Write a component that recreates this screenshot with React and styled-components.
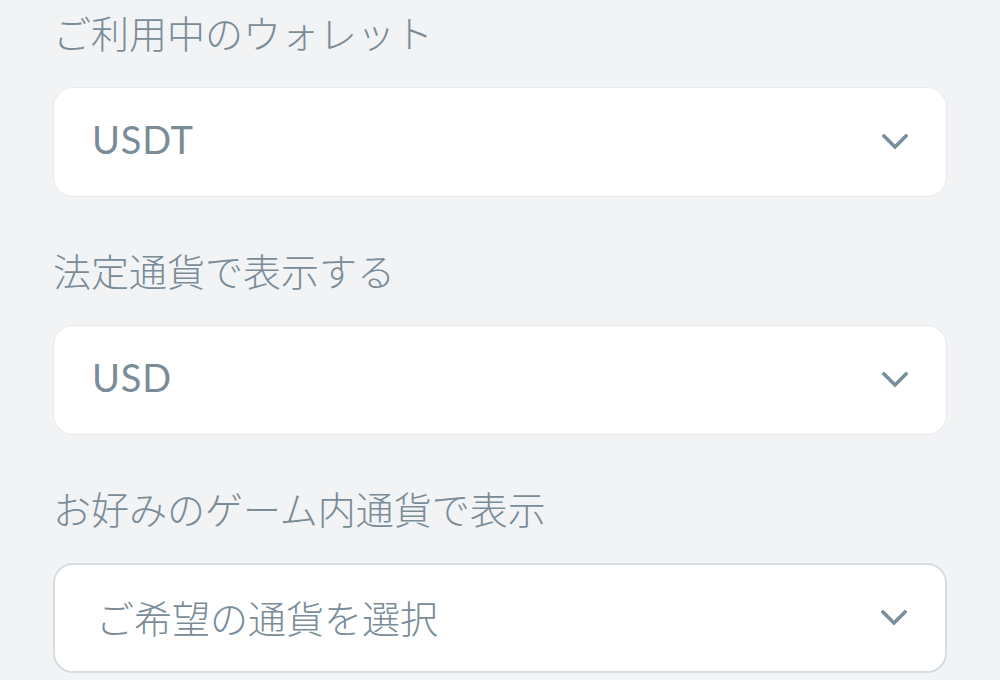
import React from "react";
import styled, { createGlobalStyle } from "styled-components";

const GlobalStyle = createGlobalStyle`
  html, body {
    margin: 0;
    padding: 0;
    background: #f2f3f5;
  }
  body {
    font-family: Lato, "Noto Sans CJK JP", sans-serif;
  }
`;

const Page = styled.main`
  display: flex;
  flex-direction: column;
  gap: 46px;
  padding: 5px 53px 0;
  min-height: 680px;
  box-sizing: border-box;
`;

const Field = styled.section`
  display: flex;
  flex-direction: column;
  gap: 28px;
`;

const Label = styled.div`
  font-family: "Noto Sans CJK JP", sans-serif;
  font-size: 38px;
  font-weight: 300;
  line-height: 54px;
  color: #7a8c97;
`;

const SelectBox = styled.div`
  display: flex;
  align-items: center;
  justify-content: space-between;
  height: 110px;
  box-sizing: border-box;
  padding: 0 38px 0 40px;
  background: #ffffff;
  border: ${(p) => (p.$active ? "2px solid #d5dde2" : "1.5px solid #e6eaed")};
  border-radius: 20px;
`;

const Value = styled.span`
  font-family: ${(p) =>
    p.$placeholder ? `"Noto Sans CJK JP", sans-serif` : `Lato, "Noto Sans CJK JP", sans-serif`};
  font-size: ${(p) => (p.$placeholder ? "38px" : "38px")};
  font-weight: ${(p) => (p.$placeholder ? 300 : 400)};
  letter-spacing: ${(p) => (p.$placeholder ? "0" : "0.8px")};
  color: #7a8c97;
  line-height: 1;
  margin-left: ${(p) => (p.$placeholder ? "1px" : "-2px")};
  padding-bottom: ${(p) => (p.$placeholder ? "2px" : "6px")};
`;

const Chevron = () => (
  <svg width="26" height="16" viewBox="0 0 26 16" fill="none">
    <polyline
      points="2,2 13,13 24,2"
      stroke="#78909b"
      strokeWidth="3.6"
      strokeLinecap="square"
    />
  </svg>
);

const fields = [
  { label: "ご利用中のウォレット", value: "USDT" },
  { label: "法定通貨で表示する", value: "USD" },
  { label: "お好みのゲーム内通貨で表示", value: "ご希望の通貨を選択", placeholder: true, active: true },
];

export default function App() {
  return (
    <>
      <GlobalStyle />
      <Page>
        {fields.map((f) => (
          <Field key={f.label}>
            <Label>{f.label}</Label>
            <SelectBox $active={f.active}>
              <Value $placeholder={f.placeholder}>{f.value}</Value>
              <Chevron />
            </SelectBox>
          </Field>
        ))}
      </Page>
    </>
  );
}
